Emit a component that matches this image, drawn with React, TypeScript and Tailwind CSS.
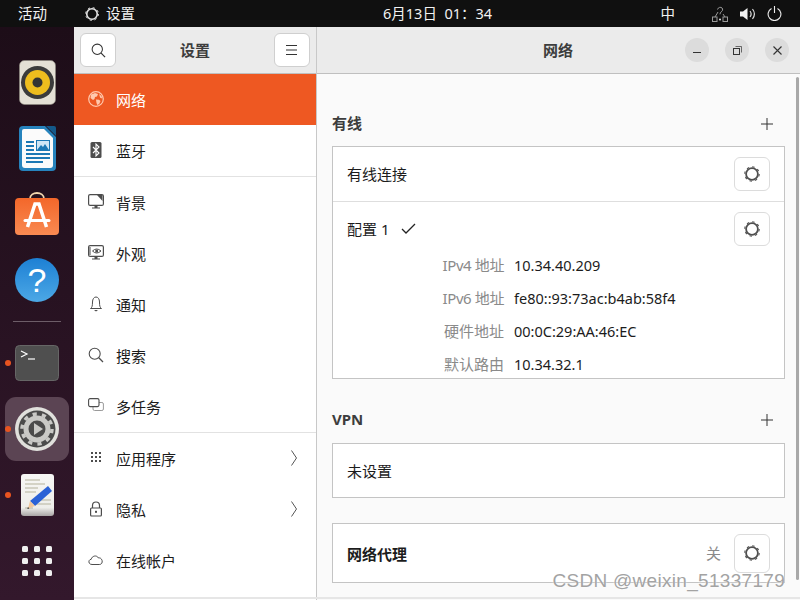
import type { ReactNode } from 'react';

function GearIcon({ color = '#505050', size = 18 }: { color?: string; size?: number }) {
  return (
    <svg width={size} height={size} viewBox="0 0 18 18" fill="none">
      <circle cx="9" cy="9" r="5.900" stroke={color} strokeWidth="1.800" />
      <circle cx="9" cy="9" r="7.200" stroke={color} strokeWidth="1.100" strokeDasharray="2.400 3.250" />
    </svg>
  );
}

function GearButton() {
  return (
    <div className="w-9 h-[34px] bg-white border border-[#dcdcdc] rounded-[6px] flex items-center justify-center shrink-0">
      <GearIcon />
    </div>
  );
}

function PlusIcon() {
  return (
    <svg width="12" height="12" viewBox="0 0 12 12" stroke="#333" strokeWidth="1">
      <path d="M6 0v12M0 6h12" />
    </svg>
  );
}

function ArrowIcon() {
  return (
    <svg className="ml-auto mb-[2px]" width="6" height="16" viewBox="0 0 6 16" fill="none" stroke="#555" strokeWidth="1">
      <path d="M.5.500 5.500 8 .5 15.500" />
    </svg>
  );
}

const stroke = { fill: 'none', stroke: '#4d4d4d', strokeWidth: 1.2 };

function GlobeIcon() {
  return (
    <svg width="16" height="16" viewBox="0 0 16 16">
      <circle cx="8" cy="8" r="7.300" fill="none" stroke="#ffc9ae" strokeWidth="1.200" />
      <path d="M3 3.500 7 2l3 1-1 2.500-2 .5-.5 2L5 9 2.500 7zM8 8.500l3 .2 1.500 1.200-1.300 3-2 1-.8-2.400zM11 3l2.500 2 .7 2.500-2-.8z" fill="#ffc9ae" />
    </svg>
  );
}

function BluetoothIcon() {
  return (
    <svg width="16" height="16" viewBox="0 0 16 16">
      <rect x="2.500" y="0" width="11" height="16" rx="1.500" fill="#4d4d4d" />
      <path d="M5 5l6 6-3 3V2l3 3-6 6" fill="none" stroke="#fff" strokeWidth="1.100" />
    </svg>
  );
}

function BackgroundIcon() {
  return (
    <svg width="16" height="16" viewBox="0 0 16 16">
      <rect x=".6" y=".6" width="14.800" height="10.800" rx="1.500" {...stroke} />
      <path d="M9 1h5.500v6z" fill="#4d4d4d" />
      <path d="M6.500 12h3v1.500h2.500v1H4v-1h2.500z" fill="#4d4d4d" />
    </svg>
  );
}

function AppearanceIcon() {
  return (
    <svg width="16" height="16" viewBox="0 0 16 16">
      <rect x=".6" y=".6" width="14.800" height="10.800" rx="1.500" {...stroke} />
      <path d="M1 3h2M1 5h2M1 7h2M1 9h2" stroke="#4d4d4d" strokeWidth="1" />
      <path d="M4.500 6Q8.500 2 13 6 8.500 10 4.500 6z" {...stroke} strokeWidth="1" />
      <circle cx="8.700" cy="6" r="1.500" fill="#4d4d4d" />
      <path d="M6.500 12h3v1.500h2.500v1H4v-1h2.500z" fill="#4d4d4d" />
    </svg>
  );
}

function BellIcon() {
  return (
    <svg width="16" height="16" viewBox="0 0 16 16">
      <path d="M2.500 12.500c1.500-1 2-2.500 2-6.500C4.500 3 6 1 8 1s3.500 2 3.500 5c0 4 .5 5.500 2 6.500z" {...stroke} strokeWidth="1" />
      <path d="M6 14h4L8 15.500z" fill="#4d4d4d" />
    </svg>
  );
}

function SearchIcon() {
  return (
    <svg width="16" height="16" viewBox="0 0 16 16">
      <circle cx="6.700" cy="6.700" r="5.500" {...stroke} strokeWidth="1.100" />
      <path d="M10.800 10.800 15 15" {...stroke} strokeWidth="1.300" />
    </svg>
  );
}

function MultitaskIcon() {
  return (
    <svg width="16" height="16" viewBox="0 0 16 16" fill="none">
      <rect x="5" y="4.500" width="10.400" height="8" rx="1.500" stroke="#9a9a9a" />
      <rect x=".6" y=".6" width="10.400" height="8" rx="1.500" fill="#fff" stroke="#4d4d4d" strokeWidth="1.100" />
    </svg>
  );
}

function AppsIcon() {
  return (
    <svg width="16" height="16" viewBox="0 0 16 16" fill="#4d4d4d">
      {[2, 6, 10].map((y) =>
        [3, 7, 11].map((x) => <rect key={`${x}-${y}`} x={x} y={y} width="2" height="2" />),
      )}
    </svg>
  );
}

function LockIcon() {
  return (
    <svg width="16" height="16" viewBox="0 0 16 16">
      <rect x="2.600" y="7" width="10.800" height="8" rx="1" {...stroke} />
      <path d="M4.500 7V4.500a3.500 3.500 0 0 1 7 0V7" {...stroke} />
      <rect x="7" y="9.800" width="2" height="2" fill="#4d4d4d" />
    </svg>
  );
}

function CloudIcon() {
  return (
    <svg width="16" height="16" viewBox="0 0 16 16">
      <path d="M4 12.500c-4 0-4-5-.8-5.200C3.800 4 8.500 2.500 10.500 6c4-1 5.500 6.500.8 6.500z" {...stroke} strokeWidth="1" />
    </svg>
  );
}

type SidebarRow = {
  label: string;
  icon: ReactNode;
  active?: boolean;
  divider?: boolean;
  arrow?: boolean;
};

const sidebarRows: SidebarRow[] = [
  { label: '网络', icon: <GlobeIcon />, active: true },
  { label: '蓝牙', icon: <BluetoothIcon />, divider: true },
  { label: '背景', icon: <BackgroundIcon /> },
  { label: '外观', icon: <AppearanceIcon /> },
  { label: '通知', icon: <BellIcon /> },
  { label: '搜索', icon: <SearchIcon /> },
  { label: '多任务', icon: <MultitaskIcon />, divider: true },
  { label: '应用程序', icon: <AppsIcon />, arrow: true },
  { label: '隐私', icon: <LockIcon />, arrow: true },
  { label: '在线帐户', icon: <CloudIcon /> },
];

const details = [
  ['IPv4 地址', '10.34.40.209'],
  ['IPv6 地址', 'fe80::93:73ac:b4ab:58f4'],
  ['硬件地址', '00:0C:29:AA:46:EC'],
  ['默认路由', '10.34.32.1'],
];

function RhythmboxIcon() {
  return (
    <svg width="37" height="45" viewBox="0 0 37 45">
      <rect x=".5" y=".5" width="36" height="44" rx="5" fill="#e4e0d5" stroke="#8d8a80" strokeWidth=".6" />
      <circle cx="18.500" cy="22.500" r="16.500" fill="#3b3b3b" />
      <circle cx="18.500" cy="22.500" r="12.500" fill="#eebd1e" />
      <circle cx="18.500" cy="22.500" r="5" fill="#333" />
    </svg>
  );
}

function WriterIcon() {
  return (
    <svg width="37" height="45" viewBox="0 0 37 45">
      <path d="M4 0h22l11 11v30a4 4 0 0 1-4 4H4a4 4 0 0 1-4-4V4a4 4 0 0 1 4-4z" fill="#2683bd" />
      <path d="M5 3h20l9 9v27a3 3 0 0 1-3 3H6a3 3 0 0 1-3-3V5a2 2 0 0 1 2-2z" fill="#fbfbfb" />
      <path d="M27 0h8a2 2 0 0 1 2 2v8z" fill="#14598a" />
      <path d="M7 16h8M7 20h8M7 24h8" stroke="#1c78b4" strokeWidth="2" />
      <rect x="17.500" y="14.500" width="13" height="10" fill="#cfe6f5" stroke="#1c78b4" />
      <path d="M18 24l4-5 2 2 2-3 4 6z" fill="#1c78b4" />
      <path d="M7 28h24M7 32h24M7 36h17" stroke="#1c78b4" strokeWidth="2" />
    </svg>
  );
}

function StoreIcon() {
  return (
    <svg width="44" height="44" viewBox="0 0 44 44">
      <defs>
        <linearGradient id="store" x1="0" y1="0" x2="0" y2="1">
          <stop offset="0" stopColor="#f3672a" />
          <stop offset="1" stopColor="#f98a52" />
        </linearGradient>
      </defs>
      <path d="M15 7c0-8 14-8 14 0" fill="none" stroke="#f1d6ae" strokeWidth="1.800" />
      <rect x="0" y="6" width="44" height="37" rx="4" fill="url(#store)" />
      <path d="M12.500 35 20 12h4l7.500 23" fill="none" stroke="#fff" strokeWidth="3.500" />
      <path d="M10 28.500h24" stroke="#fff" strokeWidth="3" strokeLinecap="round" />
    </svg>
  );
}

function HelpIcon() {
  return (
    <svg width="44" height="44" viewBox="0 0 44 44">
      <defs>
        <linearGradient id="help" x1="0" y1="0" x2="0" y2="1">
          <stop offset="0" stopColor="#1d80d4" />
          <stop offset="1" stopColor="#4ca8e6" />
        </linearGradient>
      </defs>
      <circle cx="22" cy="22" r="22" fill="url(#help)" />
      <text x="22" y="34" textAnchor="middle" fontSize="34" fill="#fff" fontFamily="Liberation Sans, sans-serif">?</text>
    </svg>
  );
}

function TerminalIcon() {
  return (
    <svg width="44" height="36" viewBox="0 0 44 36">
      <rect x=".5" y=".5" width="43" height="35" rx="4" fill="#4f4f4f" stroke="#666" />
      <path d="M6 6l6 3-6 3" fill="none" stroke="#fff" strokeWidth="1.200" />
      <path d="M13 14h7" stroke="#fff" strokeWidth="1.200" />
    </svg>
  );
}

function SettingsAppIcon() {
  return (
    <svg width="44" height="44" viewBox="0 0 44 44">
      <circle cx="22" cy="22" r="22" fill="#e0e0dc" />
      <circle cx="22" cy="22" r="18.500" fill="#4b4b4b" />
      <circle cx="22" cy="22" r="11" fill="none" stroke="#c9c9c6" strokeWidth="5" />
      <circle cx="22" cy="22" r="15" fill="none" stroke="#c9c9c6" strokeWidth="3.500" strokeDasharray="4.200 5.200" />
      <path d="M19 16l9 6-9 6z" fill="#c9c9c6" />
    </svg>
  );
}

function EditorIcon() {
  return (
    <svg width="33" height="42" viewBox="0 0 33 42">
      <defs>
        <linearGradient id="paper" x1="0" y1="0" x2="0" y2="1">
          <stop offset="0" stopColor="#f7f7f5" />
          <stop offset=".8" stopColor="#eeeeea" />
          <stop offset="1" stopColor="#a9a5a5" />
        </linearGradient>
      </defs>
      <rect width="33" height="42" rx="3" fill="url(#paper)" />
      <path d="M4 6h15M4 10h20M4 14h13M4 18h11M14 26h16M14 30h16M4 34h8" stroke="#c9c7b8" strokeWidth="1.600" />
      <path d="M27 12l4 5-17 15-5-5z" fill="#2b62d6" />
      <path d="M9 27l5 5-7 2.500z" fill="#f2c79b" />
      <path d="M7 33l-.7 2 2-.6z" fill="#333" />
    </svg>
  );
}

type DockItem = { icon: ReactNode; running?: boolean; focused?: boolean };

const dockTop: DockItem[] = [
  { icon: <RhythmboxIcon /> },
  { icon: <WriterIcon /> },
  { icon: <StoreIcon /> },
  { icon: <HelpIcon /> },
];

const dockBottom: DockItem[] = [
  { icon: <TerminalIcon />, running: true },
  { icon: <SettingsAppIcon />, running: true, focused: true },
  { icon: <EditorIcon />, running: true },
];

function DockEntry({ item }: { item: DockItem }) {
  return (
    <div className="relative h-[66px] w-full flex items-center justify-center">
      {item.focused && <div className="absolute inset-x-[5px] inset-y-px rounded-[11px] bg-[#5b4453]" />}
      {item.running && <div className="absolute left-[5px] top-[30px] w-[6px] h-[6px] rounded-full bg-[#e95420] z-10" />}
      <div className="relative flex">{item.icon}</div>
    </div>
  );
}

function Dock() {
  return (
    <div className="w-[74px] shrink-0 pt-[22px] flex flex-col items-center bg-linear-to-b from-[#1d0d18] to-[#33182c]">
      {dockTop.map((item, i) => (
        <DockEntry key={i} item={item} />
      ))}
      <div className="h-[17px] w-full flex items-center justify-center">
        <div className="w-[48px] h-px bg-[#6d5d68]" />
      </div>
      {dockBottom.map((item, i) => (
        <DockEntry key={i} item={item} />
      ))}
      <div className="h-[66px] w-full flex items-center justify-center">
        <div className="grid grid-cols-3 gap-[6px]">
          {Array.from({ length: 9 }).map((_, i) => (
            <div key={i} className="w-[6px] h-[6px] rounded-[1.500px] bg-[#efefef]" />
          ))}
        </div>
      </div>
    </div>
  );
}

function TopBar() {
  return (
    <div className="h-[27px] shrink-0 bg-[#101010] text-[#f2f2f2] text-[14.500px] flex items-center relative">
      <span className="ml-[18px]">活动</span>
      <span className="ml-[37px] flex">
        <GearIcon color="#e6e6e6" size={16} />
      </span>
      <span className="ml-[6px]">设置</span>
      <span className="absolute left-[383px]">6月13日 &nbsp;01：34</span>
      <div className="ml-auto flex items-center">
        <span className="mr-[37px]">中</span>
        <svg width="16" height="16" viewBox="0 0 16 16" fill="none" stroke="#9a9a9a" strokeWidth="1">
          <rect x=".5" y="11" width="4.500" height="4.500" />
          <rect x="11" y="11" width="4.500" height="4.500" />
          <path d="M3 11l3-5M13 11l-2-3M5.500 3.500c1-3.500 6-2.500 5 .8-.4 1.300-2.500 1.700-2.500 4" />
          <circle cx="8" cy="13.500" r="1" fill="#e6e6e6" stroke="none" />
        </svg>
        <svg className="ml-[12px]" width="16" height="16" viewBox="0 0 16 16" fill="none">
          <path d="M0 5.500h3L7.500 2v12L3 10.500H0z" fill="#f2f2f2" />
          <path d="M10 5c1.300 1.700 1.300 4.300 0 6M12.500 3c2.300 3 2.300 7 0 10" stroke="#dcdcdc" strokeWidth="1.200" />
        </svg>
        <svg className="ml-[11px] mr-[18px]" width="15" height="15" viewBox="0 0 15 15" fill="none" stroke="#eeeeee" strokeWidth="1.100">
          <path d="M4.500 2.500a6.400 6.400 0 1 0 6 0M7.500 0v7" />
        </svg>
      </div>
    </div>
  );
}

function Sidebar() {
  return (
    <div className="w-[243px] shrink-0 bg-white border-r border-[#c8c8c8] flex flex-col">
      <div className="h-[47px] shrink-0 bg-[#ebebeb] border-b border-[#bfbfbf] px-[6px] flex items-center justify-between">
        <div className="w-9 h-[34px] bg-white border border-[#cfcfcf] rounded-[6px] flex items-center justify-center">
          <svg width="15" height="15" viewBox="0 0 16 16">
            <circle cx="6.700" cy="6.700" r="5.500" fill="none" stroke="#333" strokeWidth="1.100" />
            <path d="M10.800 10.800 15 15" stroke="#333" strokeWidth="1.300" />
          </svg>
        </div>
        <span className="font-bold text-[#3d3d3d] text-[15px]">设置</span>
        <div className="w-9 h-[34px] bg-white border border-[#cfcfcf] rounded-[6px] flex items-center justify-center">
          <svg width="11" height="10" viewBox="0 0 11 10" stroke="#333" strokeWidth="1">
            <path d="M0 .5h11M0 5h11M0 9.500h11" />
          </svg>
        </div>
      </div>
      {sidebarRows.map((row) => (
        <div
          key={row.label}
          className={`${row.divider ? 'h-[52px] border-b border-[#e2e2e2]' : 'h-[51px]'} ${
            row.active ? 'bg-[#ee5822] text-white' : 'text-[#1c1c1c]'
          } shrink-0 pl-[14px] pr-[19px] flex items-center`}
        >
          <span className="w-4 flex mb-[1px]">{row.icon}</span>
          <span className="ml-[12px] mt-[2px] text-[15px]">{row.label}</span>
          {row.arrow && <ArrowIcon />}
        </div>
      ))}
    </div>
  );
}

function NetworkPanel() {
  return (
    <div className="flex-1 relative bg-[#fafafa] pt-[38px] px-[15px] text-[15px] text-[#1c1c1c]">
      <div className="h-6 pr-[12px] flex items-center justify-between font-bold text-[#3d3d3d]">
        <span className="mb-[2px]">有线</span>
        <PlusIcon />
      </div>
      <div className="mt-[10px] h-[233px] overflow-hidden bg-white border border-[#c4c4c4]">
        <div className="h-[55px] px-[14px] border-b border-[#dedede] flex items-center justify-between">
          <span>有线连接</span>
          <GearButton />
        </div>
        <div className="h-[48px] px-[14px] pt-[10px] flex items-start justify-between">
          <span className="flex items-center h-[34px] gap-[12px]">
            配置 1
            <svg width="15" height="12" viewBox="0 0 15 12" fill="none" stroke="#222" strokeWidth="1.300">
              <path d="M1 6l4 4 9-9" />
            </svg>
          </span>
          <GearButton />
        </div>
        {details.map(([label, value]) => (
          <div key={label} className="h-[33px] pl-[14px] pb-[2px] flex items-center">
            <span className={`w-[157px] text-right text-[#8a8a8a] ${label.startsWith('IPv') ? 'tracking-[-0.4px]' : ''}`}>{label}</span>
            <span className="ml-[10px] text-[14.500px]">{value}</span>
          </div>
        ))}
      </div>
      <div className="mt-[29px] h-6 pr-[12px] flex items-center justify-between font-bold text-[#3d3d3d]">
        <span className="mb-[2px]">VPN</span>
        <PlusIcon />
      </div>
      <div className="mt-[11px] h-[55px] px-[14px] pt-[2px] bg-white border border-[#c4c4c4] flex items-center">未设置</div>
      <div className="mt-[25px] h-[60px] px-[14px] bg-white border border-[#c4c4c4] flex items-center">
        <span className="font-bold mt-[2px]">网络代理</span>
        <span className="ml-auto mr-[13px] text-[#8a8a8a]">关</span>
        <div className="h-[39px] w-9 bg-white border border-[#dcdcdc] rounded-[6px] flex items-center justify-center">
          <GearIcon />
        </div>
      </div>
      <div className="absolute top-[3px] right-px w-[3px] h-[503px] rounded-full bg-[#a8a8a8]" />
    </div>
  );
}

function TitleBar() {
  return (
    <div className="h-[47px] shrink-0 bg-[#ebebeb] border-b border-[#bfbfbf] pr-[11px] flex items-center">
      <span className="flex-1 pl-[114px] text-center font-bold text-[#3d3d3d] text-[15px]">网络</span>
      <div className="flex gap-4">
        <div className="w-6 h-6 rounded-full bg-[#dcdcdc] flex items-center justify-center">
          <div className="w-2 h-px bg-[#333] mt-[4px]" />
        </div>
        <div className="w-6 h-6 rounded-full bg-[#dcdcdc] flex items-center justify-center">
          <svg width="9" height="9" viewBox="0 0 9 9" fill="none" stroke="#333">
            <rect x=".5" y="2.500" width="6" height="6" />
            <path d="M2.500 .5h6v6" strokeWidth=".7" />
          </svg>
        </div>
        <div className="w-6 h-6 rounded-full bg-[#dcdcdc] flex items-center justify-center">
          <svg width="9" height="9" viewBox="0 0 9 9" stroke="#333" strokeWidth="1.100">
            <path d="M.5.500l8 8M8.500.500l-8 8" />
          </svg>
        </div>
      </div>
    </div>
  );
}

export default function App() {
  return (
    <div className="relative w-[800px] h-[600px] overflow-hidden flex flex-col bg-white font-['Noto_Sans','Noto_Sans_CJK_SC',sans-serif]">
      <TopBar />
      <div className="flex-1 min-h-0 flex">
        <Dock />
        <div className="flex-1 min-w-0 flex">
          <Sidebar />
          <div className="flex-1 min-w-0 flex flex-col">
            <TitleBar />
            <NetworkPanel />
          </div>
        </div>
      </div>
      <div className="absolute left-[74px] right-0 bottom-[1px] h-[2px] bg-[#e6e6e6]" />
      <div className="absolute right-[15px] top-[570px] text-[19px] leading-[22px] tracking-[0.3px] text-[#a3a3a3] font-['Liberation_Sans',sans-serif] [text-shadow:0_0_2px_#fff]">
        CSDN @weixin_51337179
      </div>
    </div>
  );
}
